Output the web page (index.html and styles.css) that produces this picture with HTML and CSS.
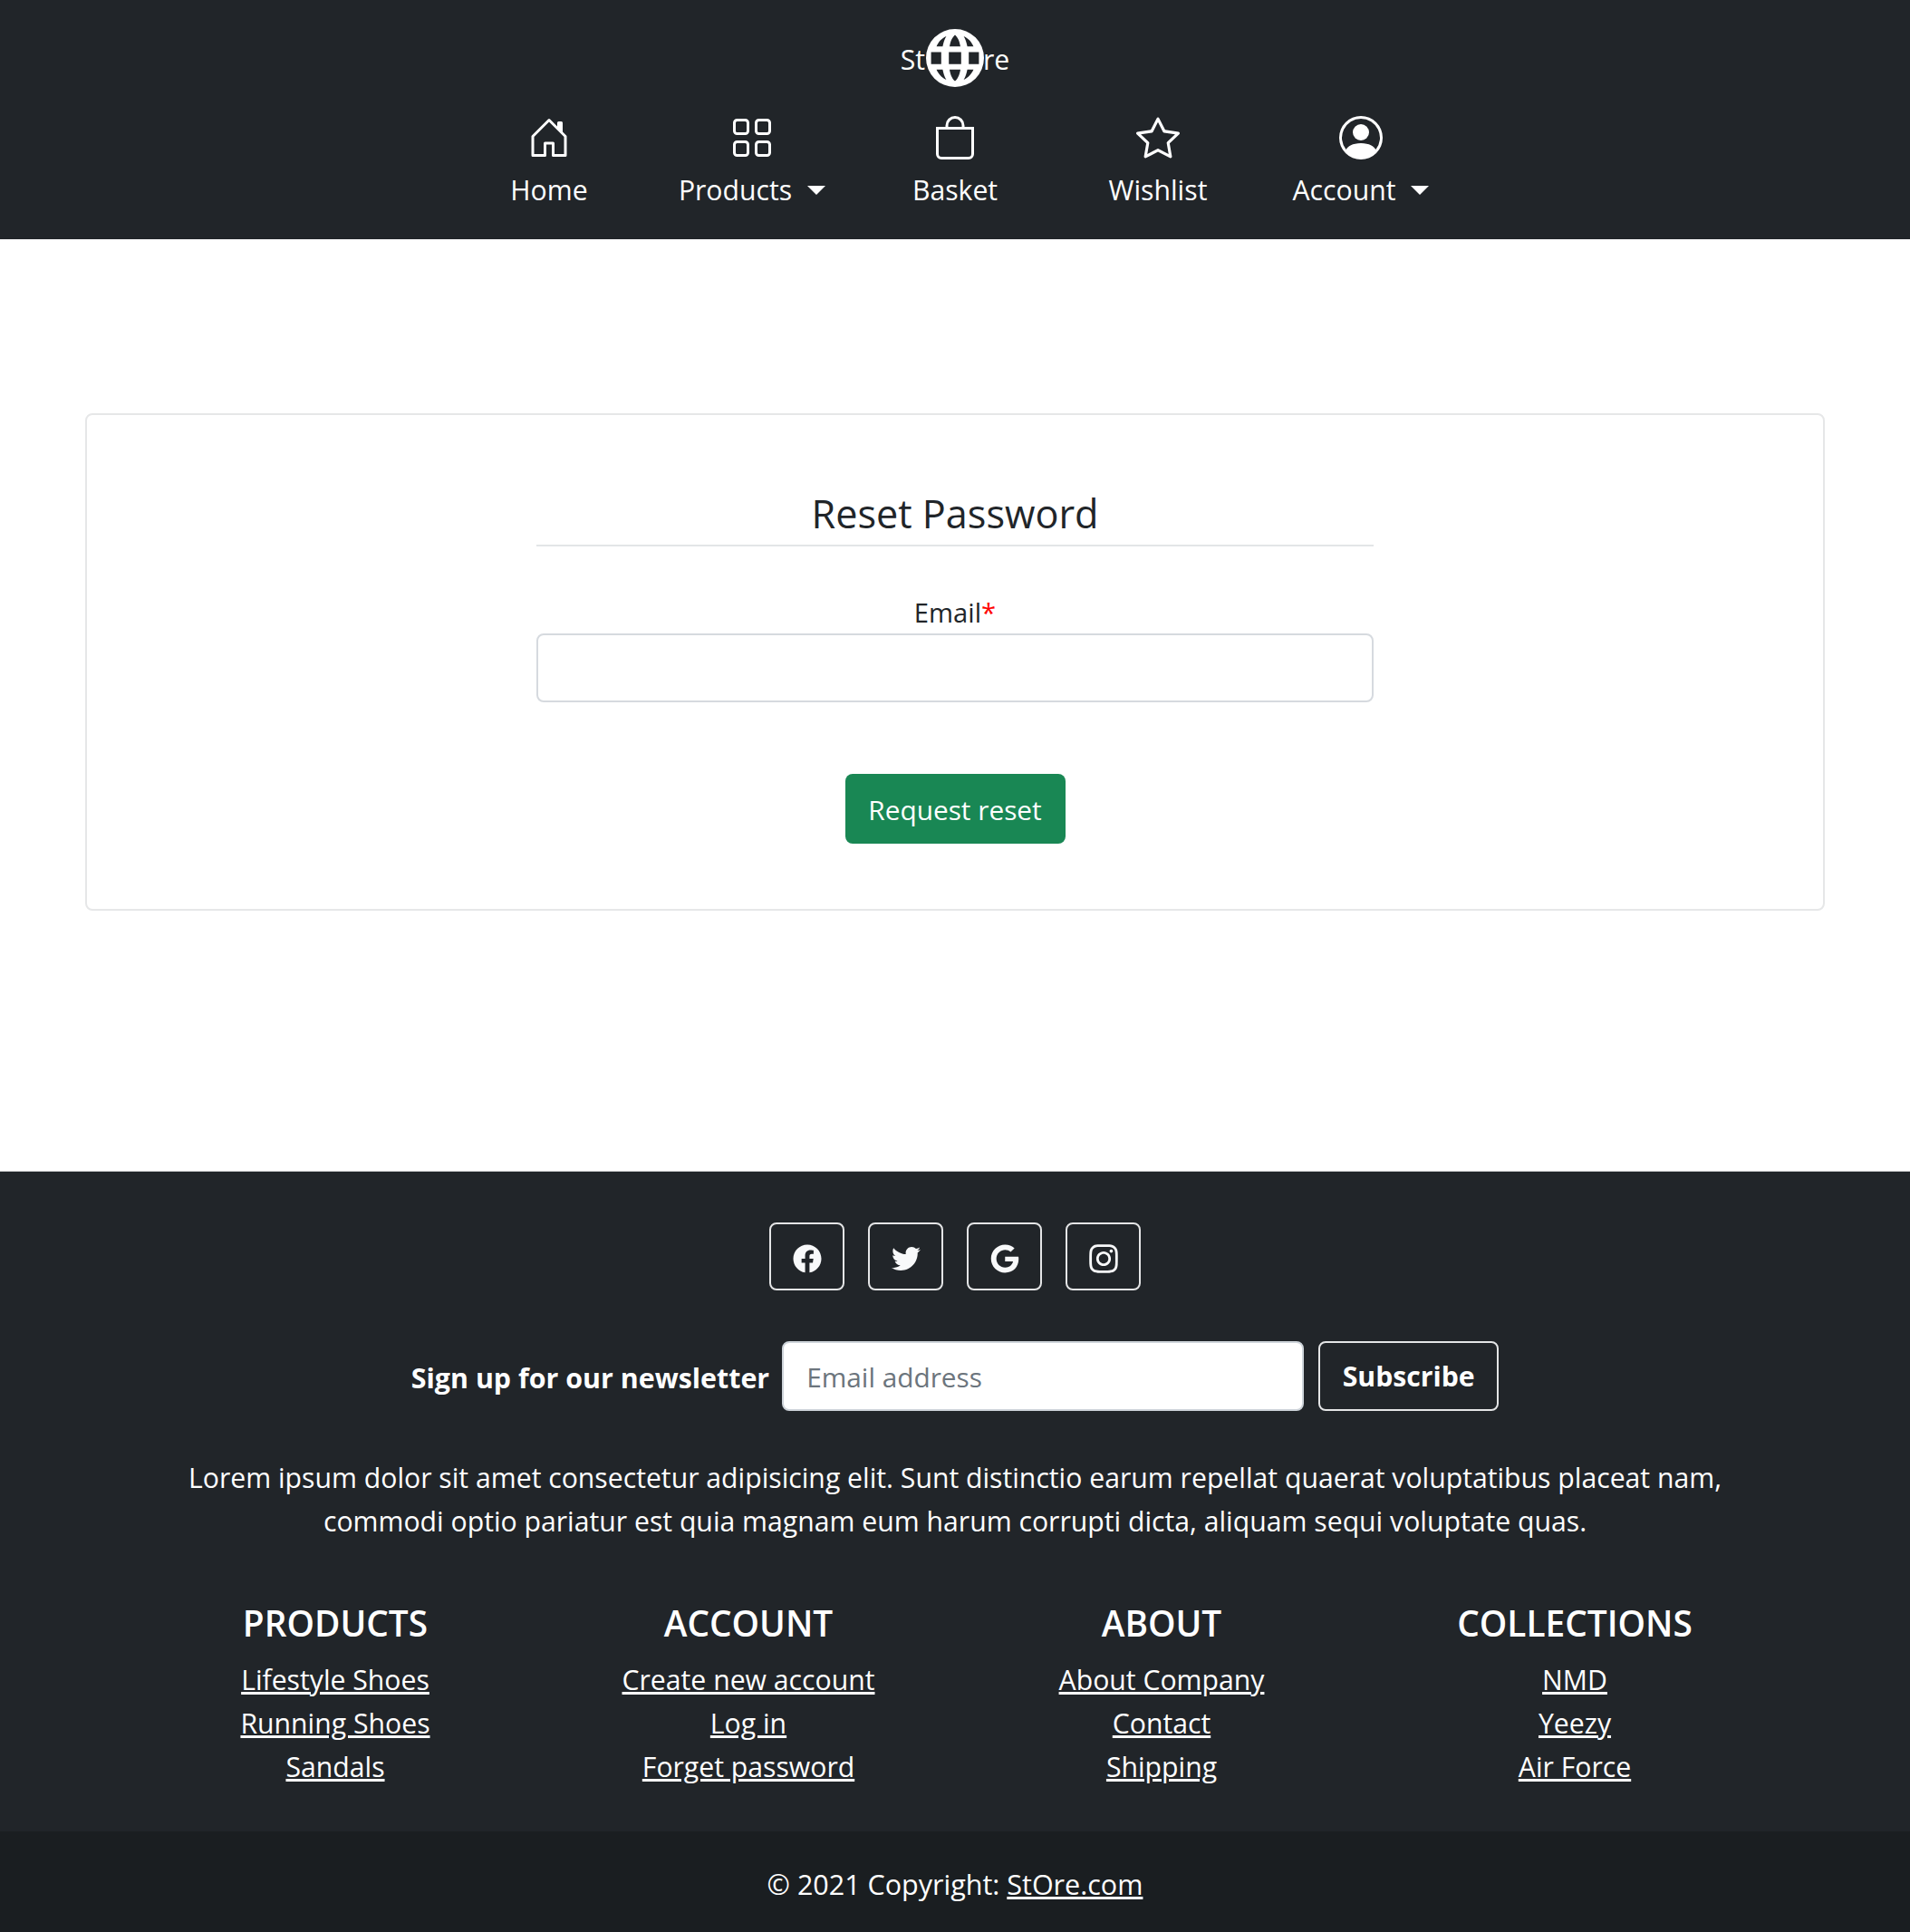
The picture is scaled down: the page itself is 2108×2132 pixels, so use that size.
FILE: index.html
```html
<!DOCTYPE html>
<html lang="en">
<head>
  <meta charset="UTF-8">
  <meta name="viewport" content="width=device-width, initial-scale=1.0">
  <title>StOre - Reset Password</title>
  <link rel="stylesheet" href="styles.css">
</head>
<body>

  <header class="cabecera">
    <a class="logo" href="#"><span class="logo-texto">St</span><svg class="logo-globo" viewBox="0 0 16 16" fill="currentColor"><path fill-rule="evenodd" d="M0 8a8 8 0 1 1 16 0A8 8 0 0 1 0 8zM1.4 6.4v3.3h2.8V6.4H1.4zm4.9 0v3.3h3.4V6.4H6.3zm5.5 0v3.3h2.8V6.4h-2.8zM8 1.6c-1 .9-1.3 2.1-1.5 3.2h3C9.3 3.7 9 2.5 8 1.6zM5.6 2C4.2 2.6 3.4 3.7 2.9 4.8h1.7C4.8 3.8 5.1 2.8 5.6 2zm4.8 0c.5.8.8 1.8 1 2.8h1.7C12.6 3.7 11.8 2.6 10.4 2zM6.5 11.2c.2 1.1.5 2.3 1.5 3.2 1-.9 1.3-2.1 1.5-3.2h-3zm-3.6 0c.5 1.1 1.3 2.2 2.7 2.8-.5-.8-.8-1.8-1-2.8H2.9zm8.5 0c-.2 1-.5 2-1 2.8 1.4-.6 2.2-1.7 2.7-2.8h-1.7z"/></svg><span class="logo-texto">re</span></a>

    <nav class="menu">
      <a class="menu-item" href="#">
        <svg class="menu-icono" viewBox="0 0 16 16" fill="currentColor"><path d="M8.354 1.146a.5.5 0 0 0-.708 0l-6 6A.5.5 0 0 0 1.5 7.5v7a.5.5 0 0 0 .5.5h4.5a.5.5 0 0 0 .5-.5v-4h2v4a.5.5 0 0 0 .5.5H14a.5.5 0 0 0 .5-.5v-7a.5.5 0 0 0-.146-.354L13 5.793V2.5a.5.5 0 0 0-.5-.5h-1a.5.5 0 0 0-.5.5v1.293L8.354 1.146zM2.5 14V7.707l5.5-5.5 5.5 5.5V14H10v-4a.5.5 0 0 0-.5-.5h-3a.5.5 0 0 0-.5.5v4H2.5z"/></svg>
        <span>Home</span>
      </a>
      <a class="menu-item" href="#">
        <svg class="menu-icono" viewBox="0 0 16 16" fill="currentColor"><path d="M1 2.5A1.5 1.5 0 0 1 2.5 1h3A1.5 1.5 0 0 1 7 2.5v3A1.5 1.5 0 0 1 5.5 7h-3A1.5 1.5 0 0 1 1 5.5v-3zM2.5 2a.5.5 0 0 0-.5.5v3a.5.5 0 0 0 .5.5h3a.5.5 0 0 0 .5-.5v-3a.5.5 0 0 0-.5-.5h-3zm6.5.5A1.5 1.5 0 0 1 10.5 1h3A1.5 1.5 0 0 1 15 2.5v3A1.5 1.5 0 0 1 13.5 7h-3A1.5 1.5 0 0 1 9 5.5v-3zm1.5-.5a.5.5 0 0 0-.5.5v3a.5.5 0 0 0 .5.5h3a.5.5 0 0 0 .5-.5v-3a.5.5 0 0 0-.5-.5h-3zM1 10.5A1.5 1.5 0 0 1 2.5 9h3A1.5 1.5 0 0 1 7 10.5v3A1.5 1.5 0 0 1 5.5 15h-3A1.5 1.5 0 0 1 1 13.5v-3zm1.5-.5a.5.5 0 0 0-.5.5v3a.5.5 0 0 0 .5.5h3a.5.5 0 0 0 .5-.5v-3a.5.5 0 0 0-.5-.5h-3zm6.5.5A1.5 1.5 0 0 1 10.5 9h3a1.5 1.5 0 0 1 1.5 1.5v3a1.5 1.5 0 0 1-1.5 1.5h-3A1.5 1.5 0 0 1 9 13.5v-3zm1.5-.5a.5.5 0 0 0-.5.5v3a.5.5 0 0 0 .5.5h3a.5.5 0 0 0 .5-.5v-3a.5.5 0 0 0-.5-.5h-3z"/></svg>
        <span class="desplegable">Products</span>
      </a>
      <a class="menu-item" href="#">
        <svg class="menu-icono" viewBox="0 0 16 16" fill="currentColor"><path d="M8 1a2.5 2.5 0 0 1 2.5 2.5V4h-5v-.5A2.5 2.5 0 0 1 8 1zm3.5 3v-.5a3.5 3.5 0 1 0-7 0V4H1v10a2 2 0 0 0 2 2h10a2 2 0 0 0 2-2V4h-3.5zM2 5h12v9a1 1 0 0 1-1 1H3a1 1 0 0 1-1-1V5z"/></svg>
        <span>Basket</span>
      </a>
      <a class="menu-item" href="#">
        <svg class="menu-icono" viewBox="0 0 16 16" fill="currentColor"><path d="M2.866 14.85c-.078.444.36.791.746.593l4.39-2.256 4.389 2.256c.386.198.824-.149.746-.592l-.83-4.73 3.522-3.356c.33-.314.16-.888-.282-.95l-4.898-.696L8.465.792a.513.513 0 0 0-.927 0L5.354 5.12l-4.898.696c-.441.062-.612.636-.283.95l3.523 3.356-.83 4.73zm4.905-2.767-3.686 1.894.694-3.957a.565.565 0 0 0-.163-.505L1.71 6.745l4.052-.576a.525.525 0 0 0 .393-.288L8 2.223l1.847 3.658a.525.525 0 0 0 .393.288l4.052.575-2.906 2.77a.565.565 0 0 0-.163.506l.694 3.957-3.686-1.894a.503.503 0 0 0-.461 0z"/></svg>
        <span>Wishlist</span>
      </a>
      <a class="menu-item" href="#">
        <svg class="menu-icono" viewBox="0 0 16 16" fill="currentColor"><path d="M11 6a3 3 0 1 1-6 0 3 3 0 0 1 6 0z"/><path fill-rule="evenodd" d="M0 8a8 8 0 1 1 16 0A8 8 0 0 1 0 8zm8-7a7 7 0 0 0-5.468 11.37C3.242 11.226 4.805 10 8 10s4.757 1.225 5.468 2.37A7 7 0 0 0 8 1z"/></svg>
        <span class="desplegable">Account</span>
      </a>
    </nav>
  </header>

  <main class="principal">
    <section class="tarjeta">
      <h1 class="titulo">Reset Password</h1>
      <form class="formulario">
        <label class="etiqueta" for="email">Email<span class="requerido">*</span></label>
        <input class="campo" type="email" id="email">
        <button class="boton-verde" type="submit">Request reset</button>
      </form>
    </section>
  </main>

  <footer class="pie">
    <div class="redes">
      <a class="red" href="#"><svg class="red-icono" viewBox="0 0 512 512" fill="currentColor"><path d="M504 256C504 119 393 8 256 8S8 119 8 256c0 123.78 90.69 226.38 209.25 245V327.69h-63V256h63v-54.64c0-62.15 37-96.48 93.67-96.48 27.14 0 55.52 4.84 55.52 4.84v61h-31.28c-30.8 0-40.41 19.12-40.41 38.73V256h68.78l-11 71.69h-57.78V501C413.31 482.38 504 379.78 504 256z"/></svg></a>
      <a class="red" href="#"><svg class="red-icono" viewBox="0 0 512 512" fill="currentColor"><path d="M459.37 151.716c.325 4.548.325 9.097.325 13.645 0 138.72-105.583 298.558-298.558 298.558-59.452 0-114.68-17.219-161.137-47.106 8.447.974 16.568 1.299 25.34 1.299 49.055 0 94.213-16.568 130.274-44.832-46.132-.975-84.792-31.188-98.112-72.772 6.498.974 12.995 1.624 19.818 1.624 9.421 0 18.843-1.3 27.614-3.573-48.081-9.747-84.143-51.98-84.143-102.985v-1.299c13.969 7.797 30.214 12.67 47.431 13.319-28.264-18.843-46.781-51.005-46.781-87.391 0-19.492 5.197-37.36 14.294-52.954 51.655 63.675 129.3 105.258 216.365 109.807-1.624-7.797-2.599-15.918-2.599-24.04 0-57.828 46.782-104.934 104.934-104.934 30.213 0 57.502 12.67 76.67 33.137 23.715-4.548 46.456-13.32 66.599-25.34-7.798 24.366-24.366 44.833-46.132 57.827 21.117-2.273 41.584-8.122 60.426-16.243-14.292 20.791-32.161 39.308-52.628 54.253z"/></svg></a>
      <a class="red" href="#"><svg class="red-icono" viewBox="0 0 488 512" fill="currentColor"><path d="M488 261.8C488 403.3 391.1 504 248 504 110.8 504 0 393.2 0 256S110.8 8 248 8c66.8 0 123 24.5 166.3 64.9l-67.5 64.9C258.5 52.6 94.3 116.6 94.3 256c0 86.5 69.1 156.6 153.7 156.6 98.2 0 135-70.4 140.8-106.9H248v-85.3h236.1c2.3 12.7 3.9 24.9 3.9 41.4z"/></svg></a>
      <a class="red" href="#"><svg class="red-icono-grande" viewBox="0 0 448 512" fill="currentColor"><path d="M224.1 141c-63.6 0-114.9 51.3-114.9 114.9s51.3 114.9 114.9 114.9S339 319.5 339 255.9 287.7 141 224.1 141zm0 189.6c-41.1 0-74.7-33.5-74.7-74.7s33.5-74.7 74.7-74.7 74.7 33.5 74.7 74.7-33.6 74.7-74.7 74.7zm146.4-194.3c0 14.9-12 26.8-26.8 26.8-14.9 0-26.8-12-26.8-26.8s12-26.8 26.8-26.8 26.8 12 26.8 26.8zm76.1 27.2c-1.7-35.9-9.9-67.7-36.2-93.9-26.2-26.2-58-34.4-93.9-36.2-37-2.1-147.9-2.1-184.9 0-35.8 1.7-67.6 9.9-93.9 36.1s-34.4 58-36.2 93.9c-2.1 37-2.1 147.9 0 184.9 1.7 35.9 9.9 67.7 36.2 93.9s58 34.4 93.9 36.2c37 2.1 147.9 2.1 184.9 0 35.9-1.7 67.7-9.9 93.9-36.2 26.2-26.2 34.4-58 36.2-93.9 2.1-37 2.1-147.8 0-184.8zM398.8 388c-7.8 19.6-22.9 34.7-42.6 42.6-29.5 11.7-99.5 9-132.1 9s-102.7 2.6-132.1-9c-19.6-7.8-34.7-22.9-42.6-42.6-11.7-29.5-9-99.5-9-132.1s-2.6-102.7 9-132.1c7.8-19.6 22.9-34.7 42.6-42.6 29.5-11.7 99.5-9 132.1-9s102.7-2.6 132.1 9c19.6 7.8 34.7 22.9 42.6 42.6 11.7 29.5 9 99.5 9 132.1s2.7 102.7-9 132.1z"/></svg></a>
    </div>

    <form class="boletin">
      <label class="boletin-texto" for="boletinEmail">Sign up for our newsletter</label>
      <input class="boletin-campo" type="email" id="boletinEmail" placeholder="Email address">
      <button class="boletin-boton" type="submit">Subscribe</button>
    </form>

    <p class="parrafo">Lorem ipsum dolor sit amet consectetur adipisicing elit. Sunt distinctio earum repellat quaerat voluptatibus placeat nam, commodi optio pariatur est quia magnam eum harum corrupti dicta, aliquam sequi voluptate quas.</p>

    <div class="columnas">
      <div class="columna">
        <h5 class="columna-titulo">Products</h5>
        <a href="#">Lifestyle Shoes</a>
        <a href="#">Running Shoes</a>
        <a href="#">Sandals</a>
      </div>
      <div class="columna">
        <h5 class="columna-titulo">Account</h5>
        <a href="#">Create new account</a>
        <a href="#">Log in</a>
        <a href="#">Forget password</a>
      </div>
      <div class="columna">
        <h5 class="columna-titulo">About</h5>
        <a href="#">About Company</a>
        <a href="#">Contact</a>
        <a href="#">Shipping</a>
      </div>
      <div class="columna">
        <h5 class="columna-titulo">Collections</h5>
        <a href="#">NMD</a>
        <a href="#">Yeezy</a>
        <a href="#">Air Force</a>
      </div>
    </div>
  </footer>

  <div class="copyright">© 2021 Copyright: <a href="#">StOre.com</a></div>

</body>
</html>
```

FILE: styles.css
```css
/* --- General --- */
body {
  font-family: "Open Sans", "Noto Sans", sans-serif;
  font-size: 30.2px;
  line-height: 48px;
  color: #212529;
  background: #fff;
  margin: 0;
}

a {
  color: inherit;
}

/* --- Header --- */
.cabecera {
  height: 264px;
  box-sizing: border-box;
  padding-top: 32px;
  background: #212529;
  color: #fff;
}

.logo {
  display: flex;
  justify-content: center;
  align-items: center;
  height: 64px;
  text-decoration: none;
}

.logo-texto {
  padding-top: 3px;
}

.logo-globo {
  width: 64px;
  height: 64px;
  margin: 0 -1px 0 1px;
}

.menu {
  display: flex;
  justify-content: center;
  margin-top: 32px;
}

.menu-item {
  display: flex;
  flex-direction: column;
  align-items: center;
  width: 224px;
  text-decoration: none;
}

.menu-icono {
  width: 48px;
  height: 48px;
  margin-bottom: 10px;
}

.desplegable::after {
  content: "";
  display: inline-block;
  margin-left: 17px;
  vertical-align: 6px;
  border-top: 10px solid;
  border-left: 10px solid transparent;
  border-right: 10px solid transparent;
}

/* --- Reset card --- */
.principal {
  padding: 192px 94px 287px;
}

.tarjeta {
  height: 549px;
  box-sizing: border-box;
  padding-top: 77px;
  border: 2px solid #e6e7e8;
  border-radius: 8px;
}

.titulo {
  width: 924px;
  margin: 0 auto;
  padding-bottom: 2px;
  border-bottom: 2px solid #e3e5e7;
  font-size: 43.2px;
  font-weight: 400;
  line-height: 64px;
  text-align: center;
}

.formulario {
  display: flex;
  flex-direction: column;
  align-items: center;
  width: 924px;
  margin: 48px auto 0;
}

.etiqueta {
  display: block;
  padding-top: 3px;
  font-size: 29.2px;
  line-height: 45px;
}

.requerido {
  color: #f00;
}

.campo {
  width: 100%;
  height: 76px;
  box-sizing: border-box;
  border: 2px solid #d6dadf;
  border-radius: 8px;
  background: #fff;
}

.boton-verde {
  width: 243px;
  height: 77px;
  margin-top: 79px;
  padding-top: 4px;
  border: none;
  border-radius: 8px;
  background: #198754;
  color: #fff;
  font: inherit;
  font-size: 29.8px;
}

/* --- Footer --- */
.pie {
  padding: 56px 142px 47px;
  border-top: 1px solid #c8c9ca;
  background: #212529;
  color: #fff;
  text-align: center;
}

.redes {
  display: flex;
  justify-content: center;
  gap: 26px;
}

.red {
  display: flex;
  align-items: center;
  justify-content: center;
  width: 83px;
  height: 75px;
  box-sizing: border-box;
  border: 2px solid #e4e5e6;
  border-radius: 8px;
  color: #f8f9fa;
}

.red-icono {
  width: 32px;
  height: 32px;
  margin-top: 4px;
}

.red-icono-grande {
  width: 36px;
  height: 36px;
  margin-top: 4px;
}

.boletin {
  display: flex;
  justify-content: center;
  align-items: center;
  margin-top: 56px;
}

.boletin-texto {
  font-size: 30.4px;
  font-weight: 700;
  margin-top: 4px;
  margin-right: 14px;
}

.boletin-campo {
  width: 576px;
  height: 77px;
  box-sizing: border-box;
  padding: 2px 25px 0;
  border: 2px solid #ced4da;
  border-radius: 8px;
  background: #fff;
  color: #212529;
  font: inherit;
  font-size: 29.8px;
}

.boletin-campo::placeholder {
  color: #6c757d;
  opacity: 1;
}

.boletin-boton {
  width: 199px;
  height: 77px;
  margin-left: 16px;
  padding-top: 2px;
  border: 2px solid #e4e5e6;
  border-radius: 8px;
  background: transparent;
  color: #fff;
  font: inherit;
  font-weight: 700;
}

.parrafo {
  max-width: 1760px;
  margin: 50px auto 0;
}

.columnas {
  display: grid;
  grid-template-columns: repeat(4, 1fr);
  margin-top: 63px;
}

.columna a {
  display: block;
}

.columna-titulo {
  margin: 0 0 16px;
  padding-top: 2px;
  font-size: 38.8px;
  font-weight: 600;
  line-height: 46px;
  text-transform: uppercase;
}

.copyright {
  padding: 34px 0 29px;
  background: #1a1e21;
  color: #fff;
  font-size: 30.5px;
  text-align: center;
}
```
